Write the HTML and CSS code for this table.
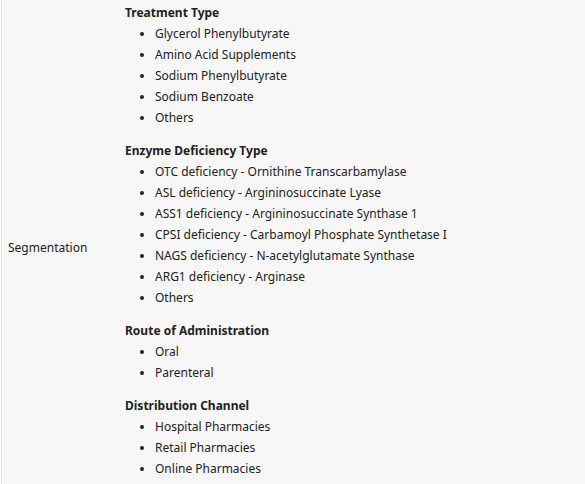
FILE: index.html
```html
<!DOCTYPE html>
<html>
<head>
<meta charset="utf-8">
<link rel="stylesheet" href="styles.css">
</head>
<body>
<div class="row">
  <div class="label">Segmentation</div>
  <div class="content">
    <section class="group">
      <div class="heading">Treatment Type</div>
      <ul>
        <li>Glycerol Phenylbutyrate</li>
        <li>Amino Acid Supplements</li>
        <li>Sodium Phenylbutyrate</li>
        <li>Sodium Benzoate</li>
        <li>Others</li>
      </ul>
    </section>
    <section class="group">
      <div class="heading">Enzyme Deficiency Type</div>
      <ul>
        <li>OTC deficiency - Ornithine Transcarbamylase</li>
        <li>ASL deficiency - Argininosuccinate Lyase</li>
        <li>ASS1 deficiency - Argininosuccinate Synthase 1</li>
        <li>CPSI deficiency - Carbamoyl Phosphate Synthetase I</li>
        <li>NAGS deficiency - N-acetylglutamate Synthase</li>
        <li>ARG1 deficiency - Arginase</li>
        <li>Others</li>
      </ul>
    </section>
    <section class="group">
      <div class="heading">Route of Administration</div>
      <ul>
        <li>Oral</li>
        <li>Parenteral</li>
      </ul>
    </section>
    <section class="group">
      <div class="heading">Distribution Channel</div>
      <ul>
        <li>Hospital Pharmacies</li>
        <li>Retail Pharmacies</li>
        <li>Online Pharmacies</li>
      </ul>
    </section>
  </div>
</div>
</body>
</html>
```

FILE: styles.css
```css
html, body {
  margin: 0;
  padding: 0;
  background: #ffffff;
  overflow: hidden;
}
body {
  font-family: "Noto Sans", "Open Sans", sans-serif;
  font-size: 12px;
  color: #222222;
}
.row {
  display: flex;
  gap: 1px;
  padding-left: 1px;
  background: #ffffff;
  min-height: 494px;
}
.label {
  width: 109px;
  flex: none;
  display: flex;
  align-items: center;
  padding-left: 6px;
  background: #f7f7f7;
  border-left: 1px solid #e4e4e4;
}
.content {
  flex: 1;
  background: #f7f7f7;
  padding: 3px 6px 5px 7px;
}
.group + .group {
  margin-top: 13px;
}
.heading {
  font-weight: 700;
  line-height: 20px;
}
ul {
  margin: 0;
  padding-left: 30px;
}
li {
  line-height: 21px;
}
```
